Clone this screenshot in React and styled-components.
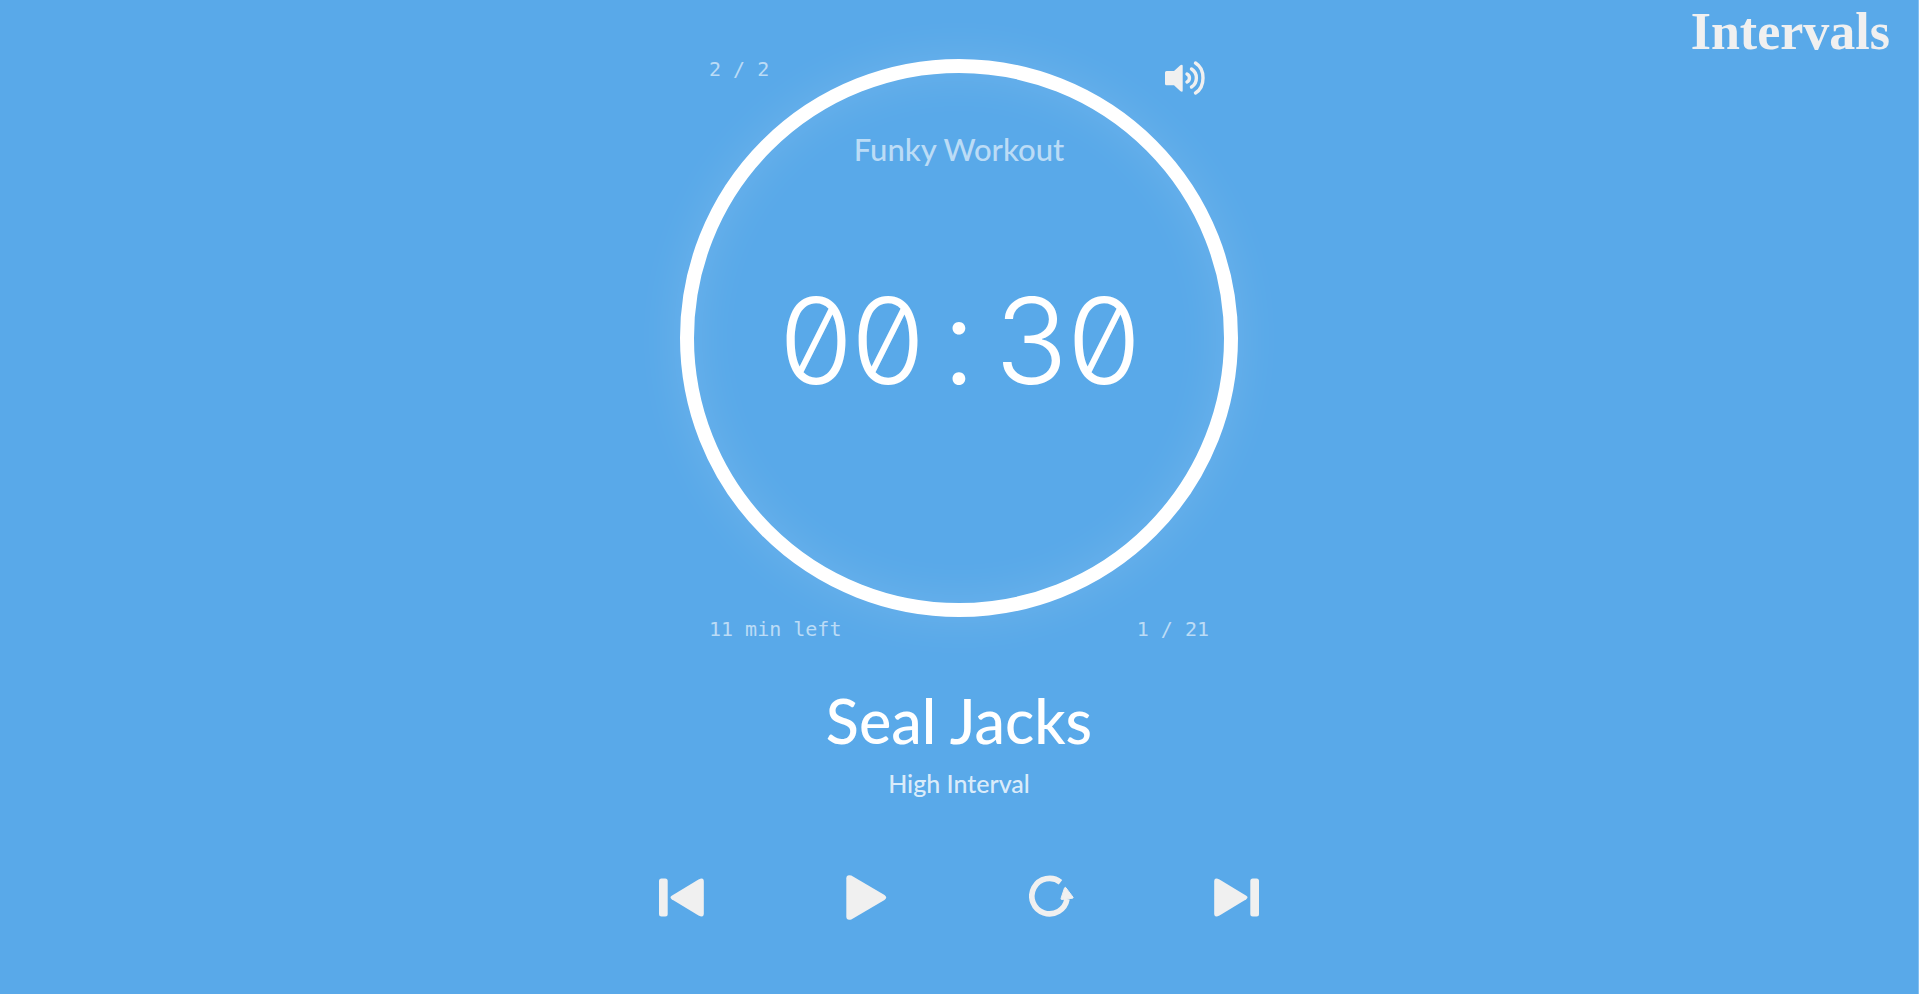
import React from "react";
import styled, { createGlobalStyle } from "styled-components";

const GlobalStyle = createGlobalStyle`
  *, *::before, *::after { box-sizing: border-box; }
  body {
    margin: 0;
    background: #59a9e9;
    color: #fff;
    font-family: Lato, "Open Sans", sans-serif;
  }
`;

const Page = styled.div`
  position: relative;
  min-height: 100vh;
  border-right: 1px solid #83c0f2;
  overflow: hidden;
`;

const Logo = styled.a`
  position: absolute;
  top: 4px;
  right: 28px;
  color: #f0f0f0;
  font: bold 52px/56px "Liberation Serif", serif;
  text-decoration: none;
`;

const Player = styled.main`
  display: flex;
  flex-direction: column;
  align-items: center;
  width: 100%;
  max-width: 600px;
  margin: 0 auto;
  padding: 59px 0 72px;
`;

const Dial = styled.section`
  display: grid;
  justify-items: center;
  width: 100%;
  > * { grid-area: 1 / 1; }
`;

const Ring = styled.div`
  display: flex;
  flex-direction: column;
  align-items: center;
  width: 100%;
  max-width: 558px;
  aspect-ratio: 1;
  padding-top: 56px;
  border: 14px solid #fff;
  border-radius: 50%;
  box-shadow: 0 0 50px rgba(255, 255, 255, 0.12), inset 0 0 50px rgba(255, 255, 255, 0.12);
`;

const WorkoutName = styled.h2`
  margin: 0 0 100px;
  font-size: 31px;
  line-height: 40px;
  font-weight: 500;
  color: rgba(255, 255, 255, 0.6);
`;

const Time = styled.time`
  display: flex;
  font-family: Inter, sans-serif;
  font-size: 120px;
  line-height: 144px;
  font-weight: 300;
  font-feature-settings: "zero", "calt" 0;
`;

const Digit = styled.span`
  width: 72px;
  text-align: center;
`;

const InfoRow = styled.div`
  display: flex;
  align-items: flex-start;
  justify-content: space-between;
  width: 100%;
  max-width: 500px;
  margin-top: ${(p) => (p.$below ? 2 : 0)}px;
`;

const Info = styled.span`
  font: 20px/20px "DejaVu Sans Mono", monospace;
  color: rgba(255, 255, 255, 0.6);
`;

const IconButton = styled.button`
  display: flex;
  width: ${(p) => p.$size}px;
  height: ${(p) => p.$size}px;
  padding: 0;
  border: 0;
  background: none;
  color: #f0f0f0;
  cursor: pointer;
  svg { width: 100%; height: 100%; }
`;

const Exercise = styled.h1`
  margin: 42px 0 0;
  font-size: 61px;
  line-height: 80px;
  font-weight: 500;
`;

const Kind = styled.p`
  margin: 6px 0 0;
  font-size: 25px;
  line-height: 32px;
  font-weight: 500;
  color: rgba(255, 255, 255, 0.8);
`;

const Controls = styled.nav`
  display: flex;
  justify-content: space-between;
  width: 100%;
  margin-top: 76px;
`;

const VolumeIcon = () => (
  <svg viewBox="1 -1 48 48" fill="none" stroke="currentColor" strokeWidth="3.4" strokeLinecap="round">
    <path stroke="none" fill="currentColor" d="M5 12.5Q5 11 6.500 11H14L20.300 5.200Q22.700 4 22.700 6V30.500Q22.700 32.500 20.500 31.300L14 25.300H6.500Q5 25.300 5 23.700Z" />
    <path d="M27 14A4.500 4.500 0 0 1 27 22" />
    <path d="M31.500 9C38 13 38 23 31.500 27" />
    <path d="M35.500 3C45.500 9 45.500 27 35.500 33" />
  </svg>
);

const PreviousIcon = () => (
  <svg viewBox="0 0 45 45" fill="currentColor">
    <rect x="0" y="3.500" width="8.700" height="38" rx="2.500" />
    <path d="M12.700 20.800 39.500 4.600Q44.800 1.800 44.800 6.600V38.400Q44.800 43.200 39.500 40.400L12.700 24.300Q10.300 22.500 12.700 20.800Z" />
  </svg>
);

const PlayIcon = () => (
  <svg viewBox="0 0 45 45" fill="currentColor">
    <path d="M2.300 3.500Q2.500-1 7.300.6L40.500 20Q43.800 22.500 40.500 25L7.300 44.400Q2.500 46 2.300 41.500Z" />
  </svg>
);

const RestartIcon = () => (
  <svg viewBox="0 0 45 45" fill="none" stroke="currentColor" strokeWidth="5.6">
    <path d="M31.500 7.200A17.700 17.700 0 1 0 38 24" />
    <path d="M36.900 12.700 44 22.200Q44.500 23 43.500 23.200L32.800 24.500Q31.800 24.500 32 23.500L35.500 12.900Q36.200 11.800 36.900 12.700Z" fill="currentColor" strokeWidth="1" />
  </svg>
);

const NextIcon = () => (
  <svg viewBox="0 0 45 45" fill="currentColor">
    <rect x="36.300" y="3.500" width="8.700" height="38" rx="2.500" />
    <path d="M32.300 20.800 5.500 4.600Q.2 1.800.2 6.600V38.400Q.2 43.200 5.500 40.400L32.300 24.300Q34.700 22.500 32.300 20.800Z" />
  </svg>
);

const controls = [
  ["Previous", PreviousIcon],
  ["Play", PlayIcon],
  ["Restart", RestartIcon],
  ["Next", NextIcon],
];

export default function App() {
  return (
    <>
      <GlobalStyle />
      <Page>
        <Logo href="/">Intervals</Logo>
        <Player>
          <Dial>
            <Ring>
              <WorkoutName>Funky Workout</WorkoutName>
              <Time>
                {[..."00:30"].map((char, i) => (
                  <Digit key={i}>{char}</Digit>
                ))}
              </Time>
            </Ring>
            <InfoRow>
              <Info>2 / 2</Info>
              <IconButton type="button" $size={48} aria-label="Sound">
                <VolumeIcon />
              </IconButton>
            </InfoRow>
          </Dial>
          <InfoRow $below>
            <Info>11 min left</Info>
            <Info>1 / 21</Info>
          </InfoRow>
          <Exercise>Seal Jacks</Exercise>
          <Kind>High Interval</Kind>
          <Controls aria-label="Playback">
            {controls.map(([label, Icon]) => (
              <IconButton key={label} type="button" $size={45} aria-label={label}>
                <Icon />
              </IconButton>
            ))}
          </Controls>
        </Player>
      </Page>
    </>
  );
}
